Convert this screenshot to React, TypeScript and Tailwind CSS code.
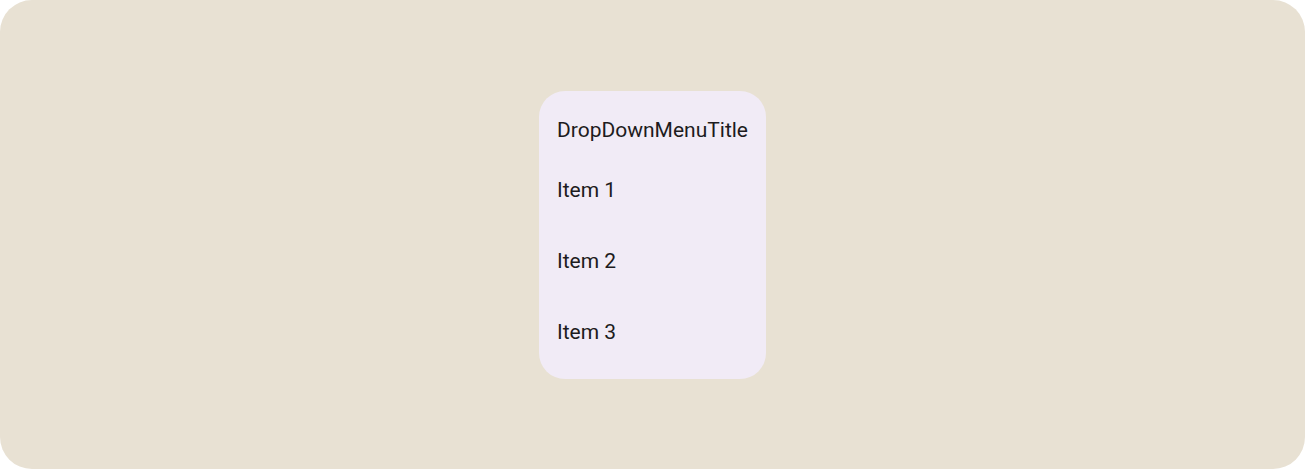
export default function App() {
  return (
    <div className="w-[1305px] h-[469px] bg-white">
      <div
        className="w-full h-full rounded-[32px] bg-[#E8E1D3] flex items-center justify-center"
        style={{ fontFamily: 'Roboto, "Noto Sans", sans-serif' }}
      >
        <div className="w-[227px] h-[288px] rounded-[26px] bg-[#F1EBF6] flex flex-col pb-[10px] text-[#1D1B20]">
          <div className="pl-[18px] pt-[25px] pb-[12px] text-[21px] leading-[28px]">DropDownMenuTitle</div>
          {["Item 1", "Item 2", "Item 3"].map((t) => (
            <div key={t} className="h-[71px] flex items-center pl-[18px] text-[21px]">
              {t}
            </div>
          ))}
        </div>
      </div>
    </div>
  );
}
